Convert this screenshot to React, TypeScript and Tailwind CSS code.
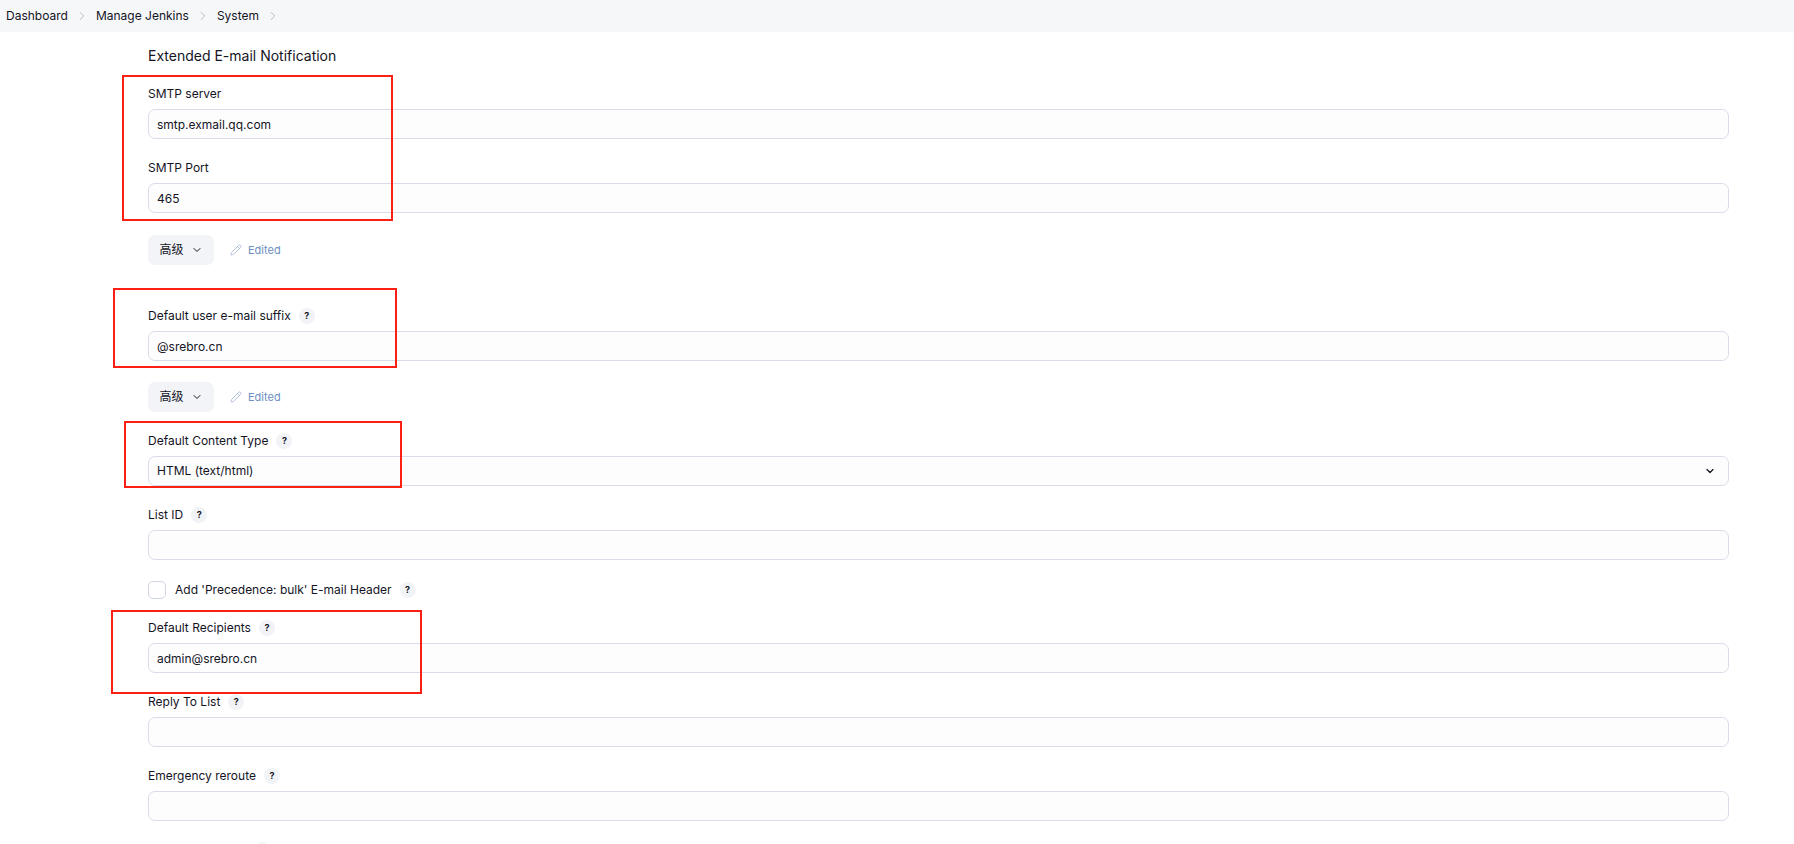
import { ChevronDown, ChevronRight, Pencil } from 'lucide-react'
import type { ReactNode } from 'react'

const fontStack = { fontFamily: 'Inter, "Noto Sans CJK SC", sans-serif' }

function Help() {
  return (
    <span className="ml-2 flex h-4 w-4 shrink-0 items-center justify-center rounded-full bg-[#f1f3f7] text-[9px] font-bold text-[#14141f]">
      ?
    </span>
  )
}

function Field({ label, help = true, className = 'mb-[19px]', children }: { label: string; help?: boolean; className?: string; children: ReactNode }) {
  return (
    <div className={className}>
      <div className="mb-[5px] flex h-5 items-center text-[12px] leading-5">
        <span>{label}</span>
        {help && <Help />}
      </div>
      {children}
    </div>
  )
}

function TextBox({ value = '' }: { value?: string }) {
  return (
    <input
      readOnly
      value={value}
      className="block h-[30px] w-full rounded-[7px] border border-[#d9dde9] bg-[#fdfdfe] px-2 text-[12px] text-[#14141f] outline-none"
    />
  )
}

function Advanced({ className }: { className: string }) {
  return (
    <div className={`flex items-center ${className}`}>
      <button className="flex h-[30px] w-[66px] items-center justify-center gap-[7px] rounded-[7px] bg-[#f2f4f7] text-[12px]">
        高级
        <ChevronDown size={12} strokeWidth={2} />
      </button>
      <span className="ml-4 flex items-center gap-[6px] text-[11px] text-[#6d8fc0]">
        <Pencil size={12} strokeWidth={1.5} className="text-[#9fb0d0]" />
        Edited
      </span>
    </div>
  )
}

function Breadcrumb() {
  const items = ['Dashboard', 'Manage Jenkins', 'System']
  return (
    <nav className="flex h-8 items-center bg-[#f6f7f9] pl-[6px] text-[12px]">
      {items.map((item) => (
        <div key={item} className="flex items-center">
          <span>{item}</span>
          <ChevronRight size={14} strokeWidth={1.5} className="mx-[7px] text-[#a9b4c6]" />
        </div>
      ))}
    </nav>
  )
}

// annotation boxes drawn over the screenshot
const marks = [
  'left-[122px] top-[75px] h-[146px] w-[271px]',
  'left-[113px] top-[288px] h-[80px] w-[284px]',
  'left-[124px] top-[421px] h-[67px] w-[278px]',
  'left-[111px] top-[610px] h-[84px] w-[311px]',
]

export default function App() {
  return (
    <div className="relative h-[844px] overflow-hidden bg-white text-[#14141f]" style={fontStack}>
      <Breadcrumb />
      <main className="pl-[148px] pr-[65px]">
        <h2 className="flex h-[46px] items-center text-[14px] font-normal">Extended E-mail Notification</h2>
        <div className="h-[6px]" />
        <Field label="SMTP server" help={false}>
          <TextBox value="smtp.exmail.qq.com" />
        </Field>
        <Field label="SMTP Port" help={false} className="mb-[22px]">
          <TextBox value="465" />
        </Field>
        <Advanced className="mb-[41px]" />
        <Field label="Default user e-mail suffix" className="mb-[21px]">
          <TextBox value="@srebro.cn" />
        </Field>
        <Advanced className="mb-[19px]" />
        <Field label="Default Content Type">
          <div className="relative">
            <select className="block h-[30px] w-full appearance-none rounded-[7px] border border-[#d9dde9] bg-[#fdfdfe] px-2 text-[12px] outline-none">
              <option>HTML (text/html)</option>
            </select>
            <ChevronDown size={12} strokeWidth={2.5} className="absolute right-[13px] top-[9px]" />
          </div>
        </Field>
        <Field label="List ID" className="mb-[21px]">
          <TextBox />
        </Field>
        <div className="mb-[19px] flex h-[18px] items-center text-[12px]">
          <span className="mr-[9px] h-[18px] w-[18px] rounded-[5px] border border-[#d0d5e3] bg-white" />
          <span>Add 'Precedence: bulk' E-mail Header</span>
          <Help />
        </div>
        <Field label="Default Recipients">
          <TextBox value="admin@srebro.cn" />
        </Field>
        <Field label="Reply To List">
          <TextBox />
        </Field>
        <Field label="Emergency reroute" className="mb-[19px]">
          <TextBox />
        </Field>
        <Field label="Allowed Domains">
          <TextBox />
        </Field>
      </main>
      {marks.map((m) => (
        <div key={m} className={`absolute border-2 border-[#fb1f14] ${m}`} />
      ))}
    </div>
  )
}
